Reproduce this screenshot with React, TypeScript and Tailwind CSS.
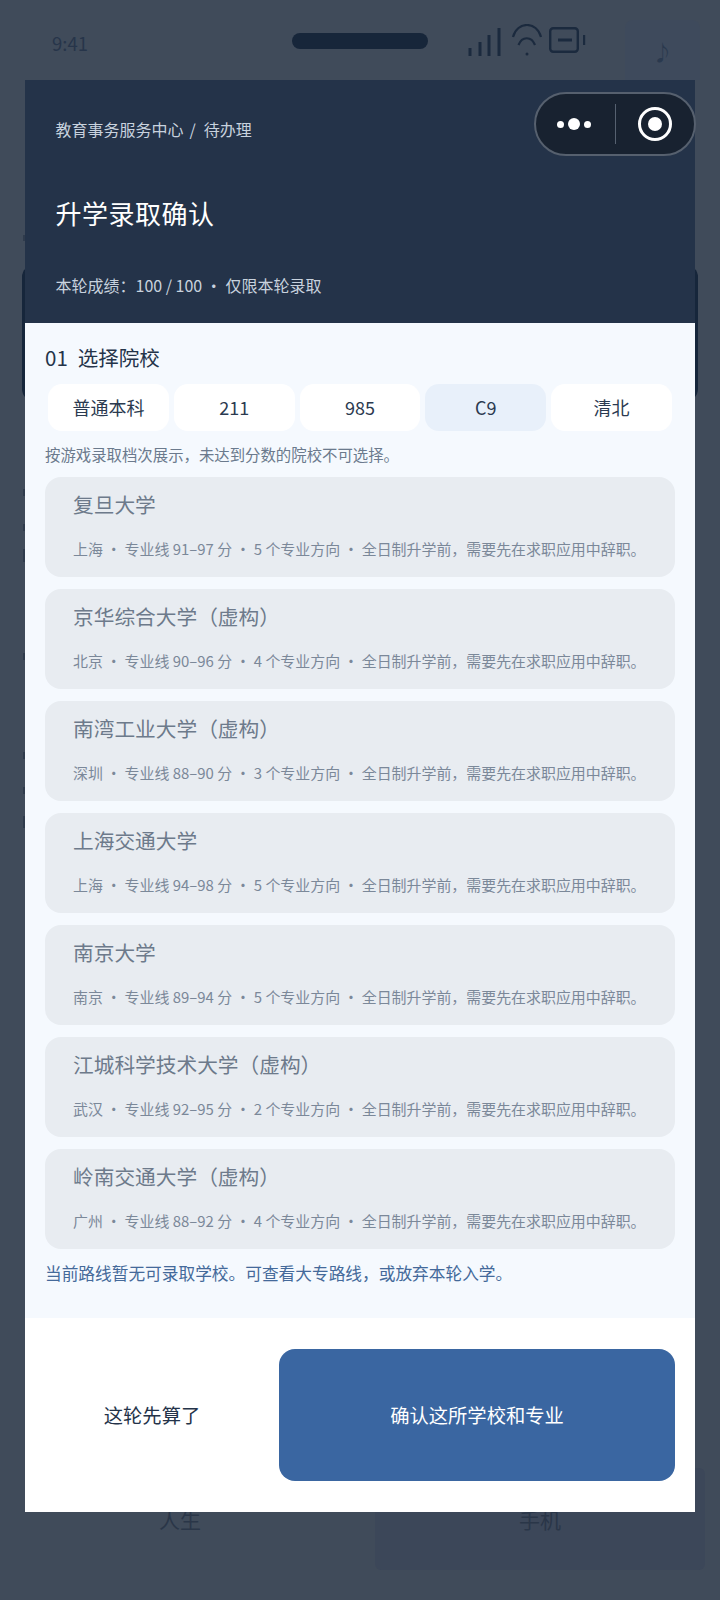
import React from 'react'

const FONT = "font-['Noto_Sans_CJK_SC','Noto_Sans',sans-serif]"

const TABS = [
  { label: '普通本科' },
  { label: '211' },
  { label: '985' },
  { label: 'C9', active: true },
  { label: '清北' },
]

const SCHOOLS = [
  { name: '复旦大学', city: '上海', line: '91–97', majors: 5 },
  { name: '京华综合大学（虚构）', city: '北京', line: '90–96', majors: 4 },
  { name: '南湾工业大学（虚构）', city: '深圳', line: '88–90', majors: 3 },
  { name: '上海交通大学', city: '上海', line: '94–98', majors: 5 },
  { name: '南京大学', city: '南京', line: '89–94', majors: 5 },
  { name: '江城科学技术大学（虚构）', city: '武汉', line: '92–95', majors: 2 },
  { name: '岭南交通大学（虚构）', city: '广州', line: '88–92', majors: 4 },
]

function StatusIcons() {
  return (
    <svg width="125" height="36" viewBox="0 0 125 36" fill="none" className="shrink-0">
      {/* signal */}
      <g fill="#1b2a3e">
        <rect x="1.5" y="24" width="3" height="8" />
        <rect x="11.5" y="18" width="3" height="14" />
        <rect x="20.5" y="11" width="3" height="21" />
        <rect x="30.5" y="4" width="3" height="28" />
      </g>
      {/* wifi */}
      <path d="M46 13 C50 -3 70 -3 74 13" stroke="#1b2a3e" strokeWidth="2.2" />
      <path d="M51.5 21 C55 12 64.5 12 68 21" stroke="#1b2a3e" strokeWidth="2.2" />
      <rect x="58.5" y="28.5" width="3" height="3" rx="1.5" fill="#1b2a3e" />
      {/* battery */}
      <rect x="83.2" y="4.2" width="27.6" height="23.6" rx="3" stroke="#1b2a3e" strokeWidth="2.4" />
      <rect x="91" y="14.5" width="14" height="3" fill="#1b2a3e" />
      <rect x="116" y="11" width="2.2" height="10" fill="#1b2a3e" />
    </svg>
  )
}

function CapsuleMenu() {
  return (
    <div className="absolute right-[24px] top-[92px] flex h-[64px] w-[162px] items-center rounded-full border-2 border-[#56606e] bg-[#182230]">
      <div className="flex w-[79px] items-center justify-center gap-[4px] pr-[3px]">
        <span className="h-[7px] w-[7px] rounded-full bg-white" />
        <span className="h-[12px] w-[12px] rounded-full bg-white" />
        <span className="h-[7px] w-[7px] rounded-full bg-white" />
      </div>
      <div className="h-[40px] w-px bg-[#566170]" />
      <div className="flex flex-1 items-center justify-center">
        <span className="flex h-[34px] w-[34px] items-center justify-center rounded-full border-[3px] border-white">
          <span className="h-[14px] w-[14px] rounded-full bg-white" />
        </span>
      </div>
    </div>
  )
}

function SchoolCard({ school }: { school: (typeof SCHOOLS)[number] }) {
  return (
    <div className="h-[100px] rounded-[16px] bg-[#e8ecf1] pl-[28px] pt-[13px]">
      <div className="text-[20.7px] leading-[28px] text-[#6d7a8b]">{school.name}</div>
      <div className="mt-[20px] whitespace-pre text-[14.95px] leading-[22px] text-[#7b8899]">
        {`${school.city} · 专业线 ${school.line} 分 · ${school.majors} 个专业方向 · 全日制升学前，需要先在求职应用中辞职。`}
      </div>
    </div>
  )
}

// slivers of the page's text that stick out left of the sheet
const EDGE_MARKS = [
  { top: 235, h: 6 },
  { top: 489, h: 7 },
  { top: 524, h: 7 },
  { top: 549, h: 13 },
  { top: 653, h: 7 },
  { top: 752, h: 7 },
  { top: 787, h: 7 },
  { top: 816, h: 12 },
]

export default function App() {
  return (
    <div className={`relative h-[1600px] w-[720px] overflow-hidden bg-[#404b5a] ${FONT}`}>
      {/* dimmed page behind the sheet */}
      <div className="flex h-[80px] items-start">
        <span className="ml-[52px] mt-[30px] w-[35px] whitespace-nowrap text-[18.5px] leading-[26px] text-[#27354a]">9:41</span>
        <div className="ml-[205px] mt-[33px] h-[16px] w-[136px] rounded-full bg-[#17263a]" />
        <div className="ml-[39px] mt-[24px]">
          <StatusIcons />
        </div>
        <div className="ml-[33px] mt-[20px] flex h-[60px] w-[75px] justify-center rounded-t-[8px] bg-[#3e4a5c] pt-[16px] text-[21px] leading-[30px] text-[#2a394e]">
          ♪
        </div>
      </div>
      <div className="mx-[22px] mt-[185px] h-[136px] rounded-[12px] bg-[#16263b]" />
      {EDGE_MARKS.map(m => (
        <div
          key={m.top}
          className="absolute left-[23px] w-[2px] bg-[#2f3b4c]"
          style={{ top: m.top, height: m.h }}
        />
      ))}
      <div className="absolute bottom-[30px] left-0 right-0 flex h-[102px] px-[15px]">
        <div className="flex flex-1 items-end justify-center pb-[36px] pr-[30px] text-[21px] leading-[30px] text-[#2a3648]">人生</div>
        <div className="flex w-[330px] items-end justify-center rounded-[6px] bg-[#3c4759] pb-[36px] text-[21px] leading-[30px] text-[#2a3648]">手机</div>
      </div>

      {/* sheet */}
      <div className="absolute left-[25px] top-[80px] w-[670px]">
        <div className="h-[243px] bg-[#243349] pl-[30.5px] pt-[37px]">
          <div className="text-[16px] leading-[24px] text-[#c8d2de]">
            教育事务服务中心
            <span className="ml-[6px] mr-[8px]">/</span>
            待办理
          </div>
          <div className="mt-[54px] text-[26px] leading-[36px] tracking-[0.02em] text-white">升学录取确认</div>
          <div className="mt-[42px] text-[16px] leading-[24px] text-[#c8d2de]">本轮成绩：100 / 100 · 仅限本轮录取</div>
        </div>

        <div className="h-[995px] bg-[#f5f9fe] px-[20px] pt-[19px]">
          <div className="flex gap-[10px] text-[20.5px] leading-[30px] text-[#243349]">
            <span>01</span>
            <span>选择院校</span>
          </div>
          <div className="mt-[12px] flex gap-[5px] px-[3px]">
            {TABS.map(tab => (
              <div
                key={tab.label}
                className={`flex h-[47px] flex-1 items-center justify-center rounded-[14px] text-[18px] text-[#2b3a50] ${
                  tab.active ? 'bg-[#e8f0fa]' : 'bg-white'
                }`}
              >
                {tab.label}
              </div>
            ))}
          </div>
          <div className="mt-[12px] text-[15.4px] leading-[22px] text-[#6b7a8d]">
            按游戏录取档次展示，未达到分数的院校不可选择。
          </div>
          <div className="mt-[12px] flex flex-col gap-[12px]">
            {SCHOOLS.map(school => (
              <SchoolCard key={school.name} school={school} />
            ))}
          </div>
          <div className="mt-[12px] text-[16.7px] font-normal leading-[24px] text-[#44699a]">
            当前路线暂无可录取学校。可查看大专路线，或放弃本轮入学。
          </div>
        </div>

        <div className="flex h-[194px] gap-[20px] bg-white px-[20px] pb-[31px] pt-[31px]">
          <button className="flex w-[214px] items-center justify-center text-[19.3px] text-[#243349]">这轮先算了</button>
          <button className="flex flex-1 items-center justify-center rounded-[16px] bg-[#3a66a1] text-[19.3px] text-white">
            确认这所学校和专业
          </button>
        </div>
      </div>

      <CapsuleMenu />
    </div>
  )
}
